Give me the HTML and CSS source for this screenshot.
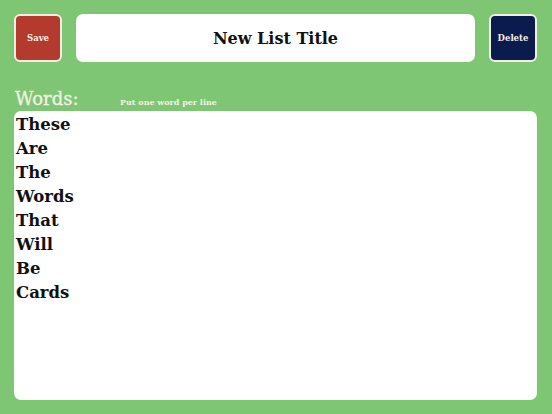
FILE: index.html
```
<!DOCTYPE html>
<html>
<head>
<meta charset="utf-8">
<link rel="stylesheet" href="styles.css">
</head>
<body>
<div class="app">
  <div class="topbar">
    <button class="btn btn-save">Save</button>
    <div class="title-box">New List Title</div>
    <button class="btn btn-delete">Delete</button>
  </div>
  <div class="label-row">
    <span class="label">Words:</span>
    <span class="hint">Put one word per line</span>
  </div>
  <div class="words">
    <div class="word">These</div>
    <div class="word">Are</div>
    <div class="word">The</div>
    <div class="word">Words</div>
    <div class="word">That</div>
    <div class="word">Will</div>
    <div class="word">Be</div>
    <div class="word">Cards</div>
  </div>
</div>
</body>
</html>
```
FILE: styles.css
```
html, body {
  margin: 0;
  padding: 0;
}
body {
  background: #7ec673;
  width: 552px;
  height: 414px;
  overflow: hidden;
  font-family: "DejaVu Serif", serif;
}
.app {
  display: flex;
  flex-direction: column;
  padding: 14px 15px 14px 14px;
  height: 414px;
  box-sizing: border-box;
}
.topbar {
  display: flex;
  align-items: flex-start;
  gap: 14px;
  height: 49px;
}
.btn {
  width: 48px;
  height: 48px;
  border: 2px solid #f3eee2;
  border-radius: 6px;
  color: #f6efe4;
  font-family: "DejaVu Serif", serif;
  font-weight: bold;
  font-size: 8.5px;
  padding: 0;
  box-sizing: border-box;
  flex: none;
}
.btn-save {
  background: #b43a2d;
}
.btn-delete {
  background: #0c1b4e;
}
.title-box {
  flex: 1;
  height: 48px;
  background: #fff;
  border-radius: 7px;
  display: flex;
  align-items: center;
  justify-content: center;
  font-weight: bold;
  font-size: 16px;
  color: #111;
}
.label-row {
  display: flex;
  align-items: baseline;
  margin-top: 24px;
  height: 24px;
}
.label {
  color: #f4f1e6;
  font-size: 18px;
  line-height: 24px;
  width: 105px;
  padding-left: 1px;
  -webkit-text-stroke: 0.3px #f4f1e6;
}
.hint {
  color: #f4f1e6;
  font-size: 8px;
  font-weight: bold;
}
.words {
  flex: 1;
  background: #fff;
  border-radius: 7px;
  padding: 2px 2px;
}
.word {
  font-weight: bold;
  font-size: 16.5px;
  line-height: 24px;
  color: #111;
}
```
